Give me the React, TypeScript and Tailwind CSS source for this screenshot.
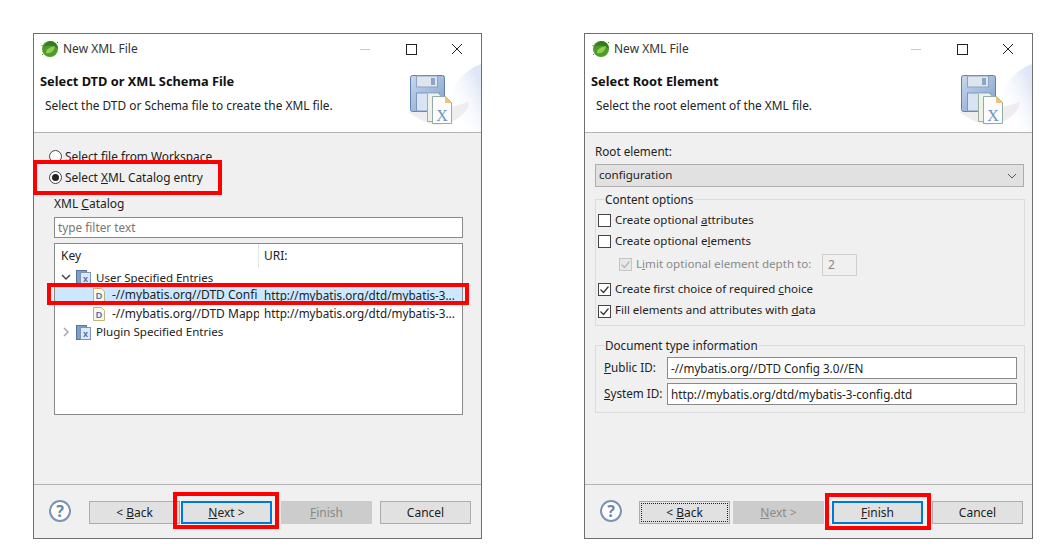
import React from "react";

const RED = "absolute border-[4px] border-[#ff0000] pointer-events-none";

function SpringLogo() {
  return (
    <svg width="18" height="18" viewBox="0 0 18 18" className="shrink-0">
      <circle cx="9" cy="9" r="8" fill="#4f9a2c" />
      <path d="M9 1a8 8 0 0 1 8 8c-3-3-10-5-14-2 1-3 3-5 6-6z" fill="#2f7d1f" />
      <path d="M5 13c0-4 4-6 9-7-1 5-4 8-9 7z" fill="#8fd04e" />
      <path d="M1.500 6l-1-1M16 3l1-1M2 14l-1 1" stroke="#3b8a25" strokeWidth="1" />
    </svg>
  );
}

function Banner() {
  return (
    <svg width="100" height="68" viewBox="0 0 100 68" className="absolute right-0 top-[30px]">
      <defs>
        <linearGradient id="bg" x1="0" y1="1" x2="1" y2="0.3">
          <stop offset="0.35" stopColor="#ffffff" stopOpacity="0" />
          <stop offset="1" stopColor="#dfe6f5" />
        </linearGradient>
        <linearGradient id="disk" x1="0" y1="0" x2="1" y2="1">
          <stop offset="0" stopColor="#c9d8ee" />
          <stop offset="1" stopColor="#7f9fcb" />
        </linearGradient>
      </defs>
      <path d="M100 0C78 8 64 30 56 68h44z" fill="url(#bg)" />
      <path d="M27 48c20-1 45-4 60-10 3 6-10 22-30 23-10 0-22-8-30-13z" fill="#e8e6ea" opacity="0.7" />
      <rect x="29.500" y="11.500" width="34" height="36" rx="2" fill="url(#disk)" stroke="#5f7fae" strokeWidth="1" />
      <rect x="35.500" y="12" width="21" height="11" fill="#dfe5ee" stroke="#8ea3bf" />
      <rect x="50" y="14" width="4" height="7" fill="#8fa5c4" />
      <rect x="35.500" y="29" width="23" height="18" fill="#d8e3f3" stroke="#7d98bf" />
      <path d="M46.500 29.500h11l4 4v24h-15z" fill="#eef3ea" stroke="#9bb09e" />
      <path d="M51.500 32.500h13l6 6v21h-19z" fill="#fbfcfb" stroke="#93aca5" />
      <path d="M64 32l7 7h-7z" fill="#f1c27c" />
      <path d="M46.500 29.500h11" stroke="#eec88f" />
      <text x="61" y="56.500" textAnchor="middle" fontFamily="'Liberation Serif', serif" fontSize="16" fill="#6d95bf">X</text>
    </svg>
  );
}

function Header({ title, desc }: { title: string; desc: string }) {
  return (
    <div className="relative h-[98px] shrink-0 bg-white overflow-hidden">
      <div className="relative h-[30px] flex items-center pl-[7px] text-[12px] text-[#333]">
        <SpringLogo />
        <span className="ml-[4px]">New XML File</span>
        <div className="absolute right-[1px] top-0 h-[30px] flex items-center z-10">
          <div className="w-[46px] flex justify-center">
            <div className="w-[10px] h-px bg-[#c8c8c8]" />
          </div>
          <div className="w-[46px] flex justify-center">
            <div className="w-[11px] h-[11px] border border-[#222]" />
          </div>
          <div className="w-[46px] flex justify-center">
            <svg width="12" height="12" viewBox="0 0 12 12"><path d="M1 1l10 10M11 1L1 11" stroke="#222" strokeWidth="1" /></svg>
          </div>
        </div>
      </div>
      <div className="pl-[6px] mt-[8px] h-[18px] leading-[18px] text-[12.8px] font-bold text-[#111]">{title}</div>
      <div className="pl-[11px] mt-[6px] h-[18px] leading-[18px] text-[11.9px] text-[#222]">{desc}</div>
      <Banner />
    </div>
  );
}

function Btn({ children, kind = "normal", className = "" }: { children: React.ReactNode; kind?: "normal" | "default" | "disabled" | "focus"; className?: string }) {
  const styles = {
    normal: "bg-[#e1e1e1] border-[#adadad] text-[#222]",
    default: "bg-[#e1e1e1] border-[2px] border-[#0078d7] text-[#222]",
    disabled: "bg-[#cccccc] border-[#cccccc] text-[#8a8a8a]",
    focus: "bg-[#e1e1e1] border-[#adadad] text-[#222]",
  }[kind];
  return (
    <div className={`relative w-[91px] h-[23px] border flex items-center justify-center text-[12px] ${styles} ${className}`}>
      {kind === "focus" && <div className="absolute inset-[1px] border border-dotted border-[#222]" />}
      {children}
    </div>
  );
}

function Footer({ children }: { children: React.ReactNode }) {
  return (
    <div className="relative h-[54px] shrink-0 bg-[#f0f0f0] border-t border-[#b4b4b4] flex items-start pt-[16px] pl-[15px]">
      <div className="w-[22px] h-[22px] -mt-[1px] rounded-full border-[2px] border-[#7b93b5] bg-white flex items-center justify-center text-[16px] font-bold text-[#6b83a8] leading-none">?</div>
      {children}
    </div>
  );
}

function Doc() {
  return (
    <svg width="12" height="14" viewBox="0 0 12 14" className="shrink-0">
      <path d="M.5.5h8l3 3v10H.5z" fill="#fbf7e9" stroke="#c4b27c" />
      <text x="6" y="11" textAnchor="middle" fontFamily="'Liberation Sans', sans-serif" fontWeight="700" fontSize="9" fill="#4f78b0">D</text>
    </svg>
  );
}

function Catalog() {
  return (
    <svg width="15" height="15" viewBox="0 0 15 15" className="shrink-0">
      <rect x=".5" y=".5" width="10" height="14" fill="#7f9fc9" stroke="#56749f" />
      <rect x="4.500" y="2.500" width="10" height="12" fill="#dce8f6" stroke="#7c93b5" />
      <text x="9.500" y="12" textAnchor="middle" fontFamily="'Liberation Sans', sans-serif" fontWeight="700" fontSize="9" fill="#3f6ea8">x</text>
    </svg>
  );
}

function Chevron({ open }: { open: boolean }) {
  return (
    <svg width="10" height="10" viewBox="0 0 10 10" className="shrink-0">
      {open ? <path d="M1 3l4 4 4-4" fill="none" stroke="#444" strokeWidth="1.5" /> : <path d="M3 1l4 4-4 4" fill="none" stroke="#aaa" strokeWidth="1.5" />}
    </svg>
  );
}

function TreeRow({ selected, indent, gap = 5, size, icon, keyText, uri }: { selected?: boolean; indent: number; gap?: number; size: string; icon: React.ReactNode; keyText: string; uri?: string }) {
  return (
    <div className={`h-[18.3px] flex items-center ${size} text-[#222] whitespace-nowrap ${selected ? "bg-[#cce8ff]" : ""}`}>
      <div className="w-[204px] shrink-0 overflow-hidden flex items-center" style={{ paddingLeft: indent, gap }}>
        {icon}
        <span>{keyText}</span>
      </div>
      {uri && <span className="ml-[5px] text-[11.7px]">{uri}</span>}
    </div>
  );
}

function Radio({ checked, children }: { checked?: boolean; children: React.ReactNode }) {
  return (
    <div className="h-[21px] flex items-center text-[11.85px] text-[#222]">
      <div className="w-[13px] h-[13px] rounded-full border border-[#444] bg-white flex items-center justify-center mr-[3px]">
        {checked && <div className="w-[7px] h-[7px] rounded-full bg-[#222]" />}
      </div>
      <span>{children}</span>
    </div>
  );
}

function LeftWindow() {
  return (
    <div className="relative w-[449px] h-[506px] shrink-0 border border-[#6f6f6f] flex flex-col">
      <Header title="Select DTD or XML Schema File" desc="Select the DTD or Schema file to create the XML file." />
      <div className="flex-1 bg-[#f0f0f0] border-t border-[#b4b4b4] pt-[13px] flex flex-col">
        <div className="pl-[15px]">
          <Radio>Select file from Workspace</Radio>
          <Radio checked>Select <u>X</u>ML Catalog entry</Radio>
        </div>
        <div className="ml-[20px] mt-[8px] h-[16px] leading-[16px] text-[12px] text-[#222]">XML <u>C</u>atalog</div>
        <div className="ml-[20px] mt-[5px] w-[409px] h-[21px] border border-[#8a8a8a] bg-white pl-[3px] leading-[18px] text-[11.8px] text-[#777]">type filter text</div>
        <div className="ml-[20px] mt-[5px] w-[409px] h-[172px] border border-[#8a8a8a] bg-white overflow-hidden">
          <div className="h-[24px] flex items-center text-[12px] text-[#222]">
            <div className="w-[204px] pl-[6px] h-full flex items-center border-r border-[#e5e5e5]">Key</div>
            <div className="pl-[5px]">URI:</div>
          </div>
          <TreeRow size="text-[11.5px]" indent={6} icon={<><Chevron open /><Catalog /></>} keyText="User Specified Entries" />
          <TreeRow size="text-[12px]" selected indent={38} gap={7} icon={<Doc />} keyText="-//mybatis.org//DTD Confi" uri="http://mybatis.org/dtd/mybatis-3..." />
          <TreeRow size="text-[12px]" indent={38} gap={7} icon={<Doc />} keyText="-//mybatis.org//DTD Mapp" uri="http://mybatis.org/dtd/mybatis-3..." />
          <TreeRow size="text-[11.6px]" indent={6} icon={<><Chevron open={false} /><Catalog /></>} keyText="Plugin Specified Entries" />
        </div>
      </div>
      <Footer>
        <div className="ml-[18px] flex">
          <Btn><span>&lt; <u>B</u>ack</span></Btn>
          <Btn kind="default" className="ml-[1px]"><span><u>N</u>ext &gt;</span></Btn>
          <Btn kind="disabled" className="ml-[9px]"><span><u>F</u>inish</span></Btn>
          <Btn className="ml-[8px]">Cancel</Btn>
        </div>
      </Footer>
      <div className={`${RED} left-[-1px] top-[126px] w-[189px] h-[35px]`} />
      <div className={`${RED} left-[13px] top-[249px] w-[422px] h-[22px]`} />
      <div className={`${RED} left-[139px] top-[458px] w-[106px] h-[37px]`} />
    </div>
  );
}

function Check({ checked, disabled }: { checked?: boolean; disabled?: boolean }) {
  return (
    <div className={`w-[13px] h-[13px] shrink-0 border flex items-center justify-center ${disabled ? "border-[#c4c4c4] bg-[#e8e8e8]" : "border-[#444] bg-white"}`}>
      {checked && (
        <svg width="11" height="11" viewBox="0 0 11 11"><path d="M1.500 5.500l3 3 5-6" fill="none" stroke={disabled ? "#b5b5b5" : "#333"} strokeWidth="1.200" /></svg>
      )}
    </div>
  );
}

function CheckRow({ checked, disabled, h, className = "", children }: { checked?: boolean; disabled?: boolean; h: string; className?: string; children: React.ReactNode }) {
  return (
    <div className={`${h} flex items-center gap-[4px] text-[11.5px] ${disabled ? "text-[#8a8a8a]" : "text-[#222]"} ${className}`}>
      <Check checked={checked} disabled={disabled} />
      <span className="whitespace-nowrap pb-[2px]">{children}</span>
    </div>
  );
}

function RightWindow() {
  return (
    <div className="relative w-[449px] h-[506px] shrink-0 border border-[#6f6f6f] flex flex-col">
      <Header title="Select Root Element" desc="Select the root element of the XML file." />
      <div className="flex-1 bg-[#f0f0f0] border-t border-[#b4b4b4] px-[10px] flex flex-col">
        <div className="mt-[10px] h-[16px] leading-[16px] text-[11.7px] text-[#222]">Root element:</div>
        <div className="mt-[5px] w-[429px] h-[23px] border border-[#adadad] bg-[#e1e1e1] flex items-center justify-between pl-[3px] pr-[6px] text-[11.6px] text-[#222]">
          <span className="pb-[2px]">configuration</span>
          <svg width="10" height="6" viewBox="0 0 10 6"><path d="M1 1l4 4 4-4" fill="none" stroke="#555" strokeWidth="1" /></svg>
        </div>
        <div className="relative mt-[12px] w-[430px] h-[127px] border border-[#dcdcdc] pl-[2px] pt-[10px]">
          <div className="absolute left-[8px] -top-[9px] px-[1px] bg-[#f0f0f0] text-[11.7px] leading-[16px] text-[#222]">Content options</div>
          <CheckRow h="h-[21px]">Create optional <u>a</u>ttributes</CheckRow>
          <CheckRow h="h-[21px]">Create optional e<u>l</u>ements</CheckRow>
          <div className="h-[25px] flex items-center">
            <CheckRow h="h-[25px]" checked disabled className="ml-[21px] w-[203px] text-[11.6px]">L<u>i</u>mit optional element depth to:</CheckRow>
            <div className="w-[35px] h-[22px] border border-[#cfcfcf] bg-[#f0f0f0] pl-[5px] leading-[20px] text-[12px] text-[#8a8a8a]">2</div>
          </div>
          <CheckRow h="h-[25px]" checked>Create first choice of required <u>c</u>hoice</CheckRow>
          <CheckRow h="h-[18px]" checked>Fill elements and attributes with <u>d</u>ata</CheckRow>
        </div>
        <div className="relative mt-[19px] w-[430px] h-[68px] border border-[#dcdcdc] pl-[8px] pt-[11px] flex flex-col gap-[4px]">
          <div className="absolute left-[8px] -top-[9px] px-[1px] bg-[#f0f0f0] text-[11.7px] leading-[16px] text-[#222]">Document type information</div>
          <div className="flex items-center text-[11.7px] text-[#222]">
            <span className="w-[63px]"><u>P</u>ublic ID:</span>
            <div className="w-[350px] h-[22px] border border-[#8a8a8a] bg-white pl-[3px] leading-[20px]">-//mybatis.org//DTD Config 3.0//EN</div>
          </div>
          <div className="flex items-center text-[11.7px] text-[#222]">
            <span className="w-[63px]"><u>S</u>ystem ID:</span>
            <div className="w-[350px] h-[22px] border border-[#8a8a8a] bg-white pl-[3px] leading-[20px]">http://mybatis.org/dtd/mybatis-3-config.dtd</div>
          </div>
        </div>
      </div>
      <Footer>
        <div className="ml-[17px] flex">
          <Btn kind="focus"><span>&lt; <u>B</u>ack</span></Btn>
          <Btn kind="disabled" className="ml-[3px]"><span><u>N</u>ext &gt;</span></Btn>
          <Btn kind="default" className="ml-[8px]"><span><u>F</u>inish</span></Btn>
          <Btn className="ml-[9px]">Cancel</Btn>
        </div>
      </Footer>
      <div className={`${RED} left-[240px] top-[459px] w-[106px] h-[37px]`} />
    </div>
  );
}

export default function App() {
  return (
    <div className="min-h-screen bg-white flex items-start gap-[102px] pl-[33px] pt-[33px] font-['Noto_Sans','Open_Sans',sans-serif]">
      <LeftWindow />
      <RightWindow />
    </div>
  );
}
